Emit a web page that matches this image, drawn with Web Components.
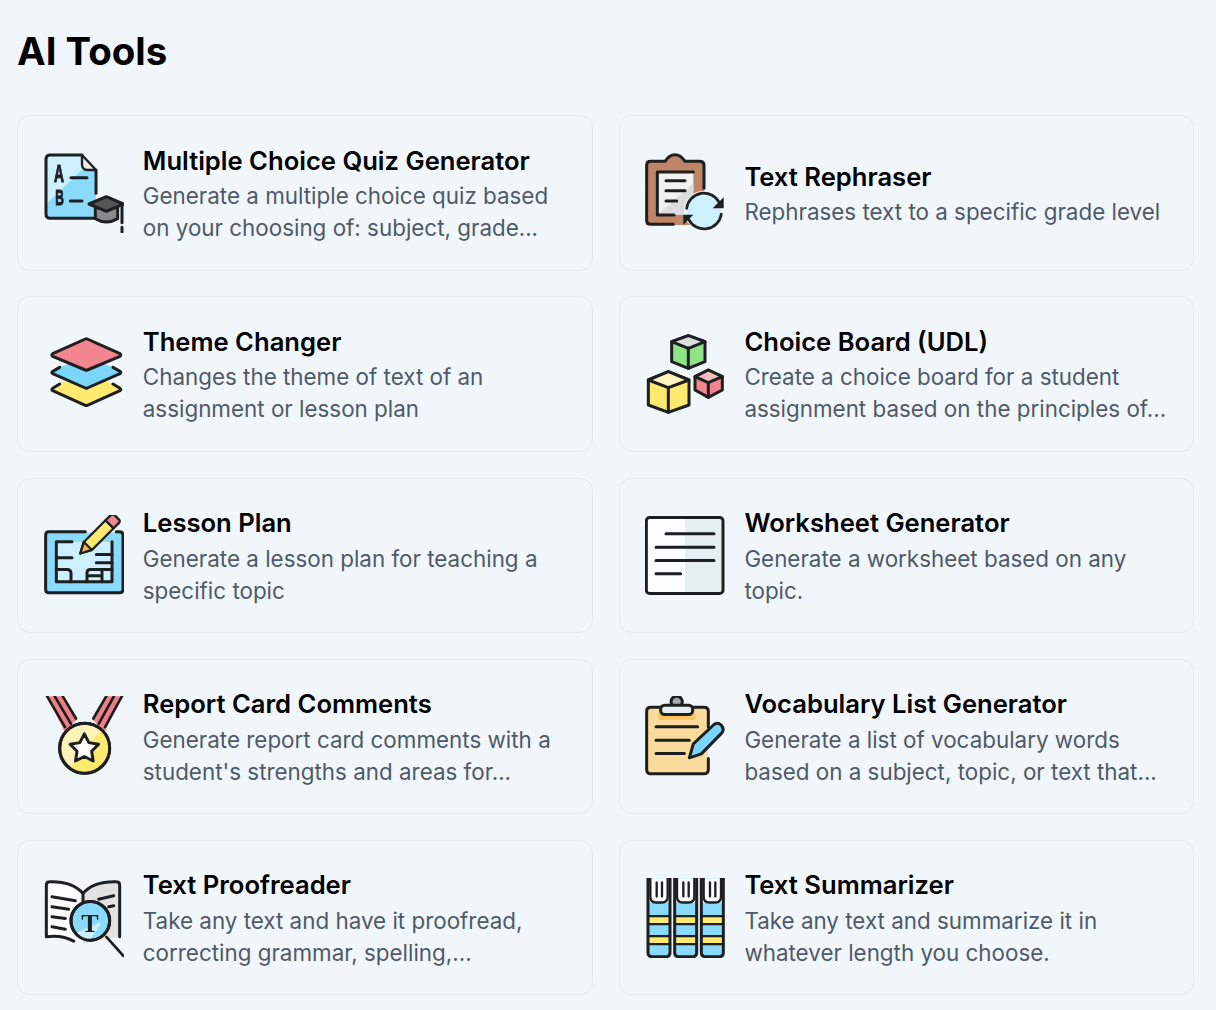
<!DOCTYPE html>
<html lang="en">
<head>
<meta charset="UTF-8">
<title>AI Tools</title>
<style>
  body { margin: 0; background: #f1f6fb; font-family: Inter, "Liberation Sans", sans-serif; }
</style>
</head>
<body>
<tools-page heading="AI Tools">
  <tool-card heading="Multiple Choice Quiz Generator"><tool-icon slot="icon" name="quiz"></tool-icon>Generate a multiple choice quiz based on your choosing of: subject, grade...</tool-card>
  <tool-card heading="Text Rephraser"><tool-icon slot="icon" name="rephrase"></tool-icon>Rephrases text to a specific grade level</tool-card>
  <tool-card heading="Theme Changer"><tool-icon slot="icon" name="layers"></tool-icon>Changes the theme of text of an assignment or lesson plan</tool-card>
  <tool-card heading="Choice Board (UDL)"><tool-icon slot="icon" name="cubes"></tool-icon>Create a choice board for a student assignment based on the principles of...</tool-card>
  <tool-card heading="Lesson Plan"><tool-icon slot="icon" name="lesson"></tool-icon>Generate a lesson plan for teaching a specific topic</tool-card>
  <tool-card heading="Worksheet Generator"><tool-icon slot="icon" name="worksheet"></tool-icon>Generate a worksheet based on any topic.</tool-card>
  <tool-card heading="Report Card Comments"><tool-icon slot="icon" name="medal"></tool-icon>Generate report card comments with a student's strengths and areas for...</tool-card>
  <tool-card heading="Vocabulary List Generator"><tool-icon slot="icon" name="vocab"></tool-icon>Generate a list of vocabulary words based on a subject, topic, or text that...</tool-card>
  <tool-card heading="Text Proofreader"><tool-icon slot="icon" name="proof"></tool-icon>Take any text and have it proofread, correcting grammar, spelling,...</tool-card>
  <tool-card heading="Text Summarizer"><tool-icon slot="icon" name="books"></tool-icon>Take any text and summarize it in whatever length you choose.</tool-card>
</tools-page>
<script>
const INK = '#1d1f21';
const BLUE = '#8adafb';
const LIGHT = '#cdf0fd';
const YELLOW = '#fdea6f';
const RED = '#f2858d';

function star(cx, cy, R, r) {
    let pts = [];
    for (let i = 0; i < 10; i++) {
        const a = -Math.PI / 2 + i * Math.PI / 5;
        const d = i % 2 ? r : R;
        pts.push((cx + d * Math.cos(a)).toFixed(1) + ',' + (cy + d * Math.sin(a)).toFixed(1));
    }
    return pts.join(' ');
}

function book(x) {
    return `
    <path d="M${x},30 H${x + 66} V252 Q${x + 66},265 ${x + 52},265 H${x + 14} Q${x},265 ${x},252 Z" fill="${BLUE}" stroke="none"/>
    <path d="M${x},30 V102 H${x + 66} V30 Z" fill="#fff" stroke="none"/>
    <rect x="${x}" y="146" width="66" height="18" fill="${YELLOW}" stroke="none"/>
    <rect x="${x}" y="206" width="66" height="18" fill="${YELLOW}" stroke="none"/>
    <path d="M${x},30 V252 Q${x},265 ${x + 14},265 H${x + 52} Q${x + 66},265 ${x + 66},252 V30"/>
    <path d="M${x + 7},30 V84 Q${x + 7},102 ${x + 24},102 H${x + 42} Q${x + 59},102 ${x + 59},84 V30" stroke-width="7"/>
    <path d="M${x + 26},42 V84 M${x + 42},42 V84" stroke-width="7"/>
    <path d="M${x},143 H${x + 66} M${x},167 H${x + 66} M${x},203 H${x + 66} M${x},227 H${x + 66}" stroke-width="7"/>`;
}

// every icon is drawn in the coordinates of a 3x crop, the viewBox is the 80px box
const ICONS = {
    quiz: { box: '41 39 240 240', body: `
    <path d="M50,45 H155 L197,90 V235 H50 Z" fill="${BLUE}" stroke="none"/>
    <path d="M50,45 H155 L160,85 L50,190 Z" fill="${LIGHT}" stroke="none"/>
    <path d="M155,45 H60 Q47,45 47,58 V222 Q47,235 60,235 H190"/>
    <path d="M197,90 V160"/>
    <path d="M155,45 L197,90 H172 Q155,90 155,73 Z" fill="#ececec" stroke-width="7"/>
    <text x="86" y="125" font-family="Liberation Sans" font-weight="700" font-size="70" text-anchor="middle" textLength="30" lengthAdjust="spacingAndGlyphs" fill="${INK}" stroke="${INK}" stroke-width="3">A</text>
    <text x="88" y="195" font-family="Liberation Sans" font-weight="700" font-size="66" text-anchor="middle" textLength="26" lengthAdjust="spacingAndGlyphs" fill="${INK}" stroke="${INK}" stroke-width="3">B</text>
    <path d="M122,113 H170 M120,183 H155"/>
    <path d="M195,203 V236 Q228,256 262,236 V203 Z" fill="#8a8a8a"/>
    <path d="M228,170 L280,192 L228,214 L176,192 Z" fill="#555"/>
    <path d="M275,195 V248 M275,262 V276"/>` },

    rephrase: { box: '45 39 240 240', body: `
    <path d="M48,62 H105 Q118,42 135,42 Q152,42 165,62 H222 V255 H48 Z" fill="#c08468" stroke="none"/>
    <path d="M130,253 H62 Q50,253 50,241 V76 Q50,64 62,64 H105 Q118,44 135,44 Q152,44 165,64 H208 Q222,64 222,76 V145"/>
    <path d="M82,96 H190 V225 H82 Z" fill="#f2f2f2" stroke="none"/>
    <path d="M82,225 L190,130 V225 Z" fill="#dcdcdc" stroke="none"/>
    <path d="M190,96 H82 V225 H132"/>
    <path d="M108,122 H165 M108,152 H165 M108,183 H140"/>
    <circle cx="222" cy="212" r="60" fill="#f1f6fb" stroke="none"/>
    <circle cx="222" cy="212" r="50" fill="${LIGHT}" stroke="none"/>
    <path d="M170,205 A52,52 0 0 1 268,188" stroke-width="8"/>
    <path d="M274,222 A52,52 0 0 1 176,238" stroke-width="8"/>
    <path d="M281,172 V205 H248 Z" fill="${INK}" stroke="none"/>
    <path d="M160,254 V224 H190 Z" fill="${INK}" stroke="none"/>` },

    layers: { box: '41 27 240 240', body: `
    <path d="M90,175 L65,193 L168,242 L272,193 L245,175 L168,150 Z" fill="${YELLOW}" stroke="none"/>
    <path d="M88,177 L67,190 Q62,194 67,197 L165,241 Q168,242 171,241 L269,197 Q274,194 269,190 L248,177"/>
    <path d="M90,125 L65,142 L168,190 L272,142 L245,125 L168,100 Z" fill="#7bd6fb" stroke="none"/>
    <path d="M88,127 L67,139 Q62,143 67,146 L165,189 Q168,190 171,189 L269,146 Q274,143 269,139 L248,127"/>
    <path d="M165,42 Q168,40 171,42 L269,86 Q274,90 269,94 L171,135 Q168,136 165,135 L67,94 Q62,90 67,86 Z" fill="${RED}"/>` },

    cubes: { box: '45 27 240 240', body: `
    <path d="M175,32 L225,50 V110 L175,130 L125,110 V50 Z" fill="#8fe388"/>
    <path d="M175,32 L225,50 L175,70 L125,50 Z" fill="#dde0dd"/>
    <path d="M175,70 V130"/>
    <path d="M115,140 L177,165 V240 L115,262 L55,240 V165 Z" fill="${YELLOW}"/>
    <path d="M115,140 L177,165 L115,188 L55,165 Z" fill="#fdf3c0"/>
    <path d="M115,188 V262"/>
    <path d="M235,135 L277,155 V195 L235,217 L195,195 V155 Z" fill="${RED}"/>
    <path d="M235,135 L277,155 L235,173 L195,155 Z" fill="#f7bcbc"/>
    <path d="M235,173 V217"/>` },

    lesson: { box: '41 31.5 240 240', body: `
    <rect x="47" y="84" width="230" height="180" fill="${BLUE}" stroke="none"/>
    <rect x="78" y="112" width="167" height="120" fill="${LIGHT}" stroke="none"/>
    <path d="M165,82 H55 Q46,82 46,92 V255 Q46,265 55,265 H268 Q278,265 278,255 V92 Q278,82 268,82 H258"/>
    <path d="M125,112 H78 V232 H245 V112"/>
    <path d="M78,160 H125 M78,195 H110 Q122,195 122,207 V232"/>
    <path d="M245,150 H198 M245,175 H198 M170,232 V205 Q170,195 180,195 H245 M170,214 H215 M215,195 V232"/>
    <g transform="translate(150,147) rotate(-45)" stroke-width="7">
      <path d="M0,0 L32,-17 H124 V17 H32 Z" fill="${YELLOW}"/>
      <path d="M0,0 L32,-17 V17 Z" fill="#f5b64f"/>
      <path d="M124,-17 H146 Q154,-17 154,-9 V9 Q154,17 146,17 H124 Z" fill="${RED}"/>
    </g>` },

    worksheet: { box: '45 28.5 240 240', body: `
    <rect x="50" y="37" width="115" height="226" fill="#fbfdfe" stroke="none"/>
    <rect x="165" y="37" width="113" height="226" fill="#e5eff2" stroke="none"/>
    <rect x="49" y="36" width="230" height="228" rx="10"/>
    <path d="M108,85 H252 M78,125 H252 M78,165 H252 M78,205 H152"/>` },

    medal: { box: '41 34.5 240 240', body: `
    <path d="M50,35 H97 L140,105 L102,140 Z" fill="#ef7f87" stroke="none"/>
    <path d="M275,35 H228 L186,105 L224,140 Z" fill="#ef7f87" stroke="none"/>
    <path d="M50,35 L104,128 M73,35 L122,118 M97,35 L137,102" stroke-width="8"/>
    <path d="M275,35 L224,128 M251,35 L205,118 M228,35 L189,102" stroke-width="8"/>
    <circle cx="163" cy="191" r="75" fill="#fdf3b8"/>
    <path d="M213,136 A75,75 0 0 1 118,251 Z" fill="${YELLOW}" stroke="none"/>
    <circle cx="163" cy="191" r="75"/>
    <polygon points="${star(162, 193, 45, 23)}" fill="#fff" stroke-linejoin="round"/>` },

    vocab: { box: '45 34.5 240 240', body: `
    <path d="M50,68 H233 V266 H50 Z" fill="#fadb9c" stroke="none"/>
    <rect x="86" y="88" width="110" height="18" fill="#fac25d" stroke="none"/>
    <path d="M92,68 H62 Q50,68 50,80 V255 Q50,268 62,268 H222 Q235,268 235,255 V222"/>
    <path d="M190,68 H222 Q235,68 235,80 V128"/>
    <circle cx="140" cy="52" r="17" fill="#a3abb0"/>
    <rect x="92" y="62" width="96" height="28" rx="12" fill="#e6eef1"/>
    <path d="M78,127 H203 M78,167 H178 M78,207 H163"/>
    <path d="M178,220 L190,178 L252,120 Q262,112 274,122 Q284,134 275,146 L214,208 Z" fill="#7bd6fb"/>` },

    proof: { box: '41 28.5 240 240', body: `
    <path d="M48,42 Q120,38 158,72 V225 Q110,196 48,205 Z" fill="#fdfdfd" stroke="none"/>
    <path d="M268,42 Q190,38 158,72 V225 L268,205 Z" fill="#e2e2e2" stroke="none"/>
    <path d="M130,218 Q95,198 48,205 V50 Q48,40 58,40 Q125,38 158,75 Q190,38 258,40 Q268,40 268,50 V205"/>
    <path d="M158,75 V100" />
    <path d="M65,85 L135,97 M65,115 L115,122 M65,145 L105,150 M65,175 L105,182 M205,92 L250,82 M235,115 L250,112"/>
    <path d="M228,205 L279,262" stroke-width="8"/>
    <circle cx="180" cy="157" r="58" fill="${BLUE}"/>
    <path d="M136,194 A58,58 0 0 0 180,215 L215,160 Z" fill="${LIGHT}" stroke="none"/>
    <circle cx="180" cy="157" r="58"/>
    <text x="179" y="190" font-family="Liberation Serif" font-weight="700" font-size="78" text-anchor="middle" fill="${INK}" stroke="none">T</text>` },

    books: { box: '45 28.5 240 240', body: book(54) + book(134) + book(214) }
};

class ToolIcon extends HTMLElement {
    constructor() {
        super();
        const icon = ICONS[this.getAttribute('name')];
        this.attachShadow({mode: 'open'}).innerHTML = `
        <style>
        :host { display: block; width: 80px; height: 80px; }
        svg { display: block; width: 80px; height: 80px; filter: blur(.45px); }
        </style>
        <svg viewBox="${icon.box}" fill="none" stroke="${INK}" stroke-width="9" stroke-linecap="round" stroke-linejoin="round">${icon.body}</svg>`;
    }
}

class ToolCard extends HTMLElement {
    constructor() {
        super();
        this.attachShadow({mode: 'open'}).innerHTML = `
        <style>
        :host {
            display: flex;
            align-items: center;
            gap: 19.2px;
            box-sizing: border-box;
            height: 155.3px;
            padding: 25px 25.6px;
            border: 1px solid #e3e9f0;
            border-radius: 12.8px;
        }
        .icon { flex: none; width: 80px; }
        .text { flex: 1; min-width: 0; }
        h3 {
            margin: 0;
            font: 600 25.6px/38.4px Inter, "Liberation Sans", sans-serif;
            color: #000;
        }
        p {
            margin: .4px 0 0;
            font: 400 22.4px/32px Inter, "Liberation Sans", sans-serif;
            color: #4f5a69;
        }
        </style>
        <div class="icon"><slot name="icon"></slot></div>
        <div class="text">
            <h3>${this.getAttribute('heading')}</h3>
            <p><slot></slot></p>
        </div>`;
    }
}

class ToolsPage extends HTMLElement {
    constructor() {
        super();
        this.attachShadow({mode: 'open'}).innerHTML = `
        <style>
        :host { display: block; padding: 19px 22px 0 17px; }
        h1 {
            margin: 0 0 32.25px 0;
            font: 700 38.4px/64px Inter, "Liberation Sans", sans-serif;
            color: #000;
        }
        .grid { display: grid; grid-template-columns: 575.6px 575.6px; gap: 25.9px 26px; }
        </style>
        <h1>${this.getAttribute('heading')}</h1>
        <div class="grid"><slot></slot></div>`;
    }
}

customElements.define('tool-icon', ToolIcon);
customElements.define('tool-card', ToolCard);
customElements.define('tools-page', ToolsPage);
</script>
</body>
</html>
